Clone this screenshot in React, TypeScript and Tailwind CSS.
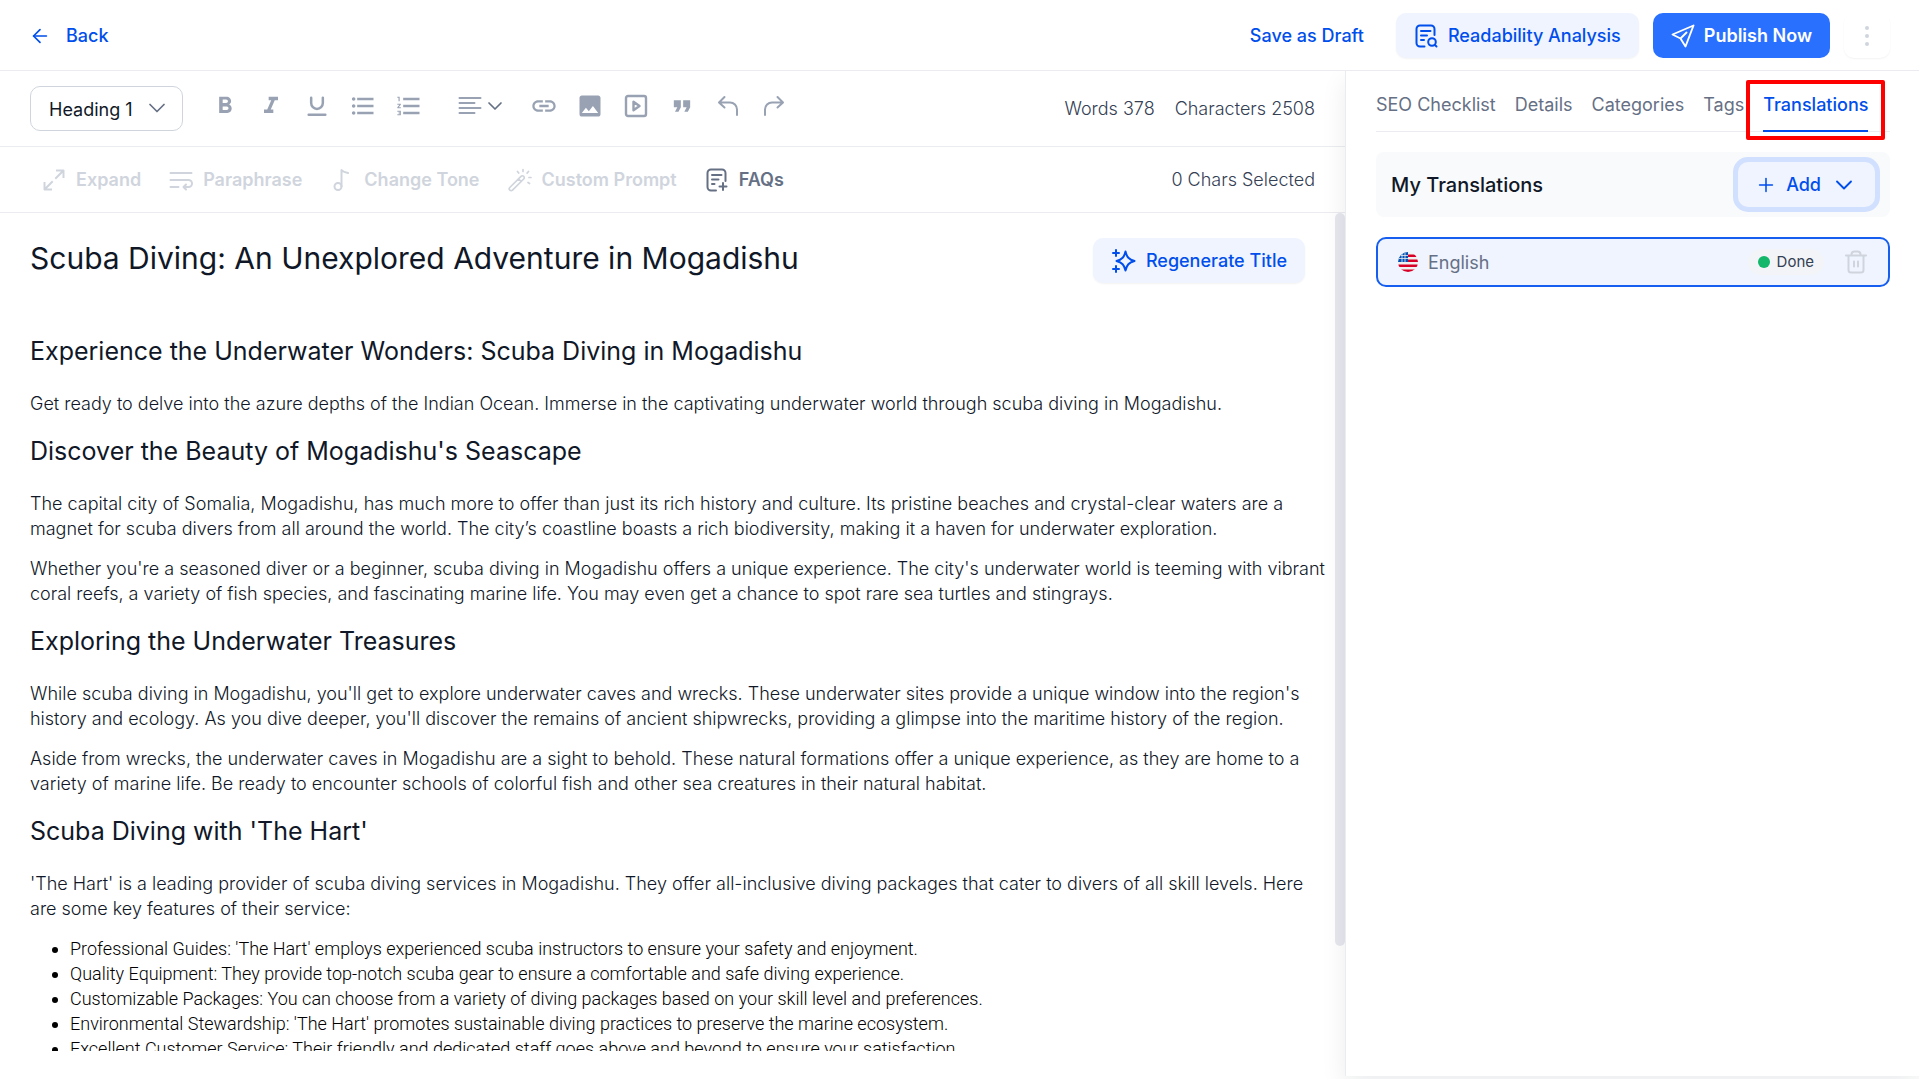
import React, { useState } from 'react';
import { ArrowLeft, ChevronDown, Plus } from 'lucide-react';
import { MdFormatBold, MdFormatItalic, MdFormatListBulleted, MdFormatListNumbered, MdFormatQuote, MdLink, MdImage } from 'react-icons/md';

type IconProps = { className?: string };

const stroke = {
  viewBox: '0 0 24 24',
  fill: 'none',
  stroke: 'currentColor',
  strokeWidth: 2,
  strokeLinecap: 'round' as const,
  strokeLinejoin: 'round' as const
};

const UnderlineIcon = ({ className }: IconProps) => (
  <svg {...stroke} strokeWidth={3} className={className}>
    <path d="M5 2v6.500a7 7 0 0 0 14 0V2M2 22.500h20" />
  </svg>
);

const AlignIcon = ({ className }: IconProps) => (
  <svg {...stroke} className={className}>
    <path d="M1.500 4h21M1.500 9h15M1.500 14h21M1.500 19h15" />
  </svg>
);

const VideoIcon = ({ className }: IconProps) => (
  <svg {...stroke} strokeWidth={2.400} className={className}>
    <rect x="2" y="2" width="20" height="20" rx="2" />
    <path d="M9.500 7.800v8.400l6-4.200z" />
  </svg>
);

const UndoIcon = ({ className }: IconProps) => (
  <svg {...stroke} className={className}>
    <path d="M8.500 3 3 8.500l5.500 5M3.500 8.500H14a7 7 0 0 1 7 7V21" />
  </svg>
);

const RedoIcon = ({ className }: IconProps) => (
  <svg {...stroke} className={className}>
    <path d="m15.500 3 5.500 5.500-5.500 5M20.500 8.500H10a7 7 0 0 0-7 7V21" />
  </svg>
);

const ExpandIcon = ({ className }: IconProps) => (
  <svg {...stroke} strokeLinecap="square" className={className}>
    <path d="M15 2.500h6.500V9M21 3l-7 7M2.500 15v6.500H9M3 21l7-7" />
  </svg>
);

const ParaphraseIcon = ({ className }: IconProps) => (
  <svg {...stroke} className={className}>
    <path d="M1.500 5h21M1.500 12h18a3.500 3.500 0 0 1 0 7H15M1.500 19h8M17 16.500 14.500 19l2.500 2.500" />
  </svg>
);

const ToneIcon = ({ className }: IconProps) => (
  <svg {...stroke} className={className}>
    <circle cx="8" cy="18.500" r="3.500" />
    <path d="M11.500 18.500V2c1.500 2 3.500 2.500 6.500 3" />
  </svg>
);

const WandIcon = ({ className }: IconProps) => (
  <svg {...stroke} strokeWidth={1.700} className={className}>
    <path d="M1.800 19.500 13 8.300a1.900 1.900 0 0 1 2.700 2.700L4.500 22.200a1.900 1.900 0 0 1-2.700-2.700zM10.500 10.800l2.700 2.700M15 1.500v2M9.500 3.500l1.200 1.600M20.500 3.500l-1.400 1.600M21 9.500h2M20 14.500l1.500 1" />
  </svg>
);

const FaqIcon = ({ className }: IconProps) => (
  <svg {...stroke} className={className}>
    <path d="M11 22.500H6a3.500 3.500 0 0 1-3.500-3.500V5A3.500 3.500 0 0 1 6 1.500h11A3.500 3.500 0 0 1 20.500 5v8M7 7h9.500M7 11.500h6.500M7 16h2.500M18 15v7M14.500 18.500h7" />
  </svg>
);

const ReadabilityIcon = ({ className }: IconProps) => (
  <svg {...stroke} className={className}>
    <path d="M10.500 22.500H6A3.500 3.500 0 0 1 2.500 19V5A3.500 3.500 0 0 1 6 1.500h11A3.500 3.500 0 0 1 20.500 5v6M7 7h9.500M7 11.500h6M7 16h3" />
    <circle cx="18" cy="18" r="3.800" />
    <path d="m21 21 1.500 1.500" />
  </svg>
);

const SendIcon = ({ className }: IconProps) => (
  <svg {...stroke} strokeWidth={1.900} className={className}>
    <path d="M22.500 1.500 1.500 10.500l8 4 5 8zM9.500 14.500l6-6" />
  </svg>
);

const SparkleIcon = ({ className }: IconProps) => (
  <svg {...stroke} className={className}>
    <path d="M13.500 2.500c1.300 5.600 3.300 7.900 9 9.500-5.700 1.600-7.700 3.900-9 9.500-1.300-5.600-3.300-7.900-9-9.500 5.700-1.600 7.700-3.900 9-9.500zM4 1v6M1 4h6M4 17v6M1 20h6" />
  </svg>
);

const TrashIcon = ({ className }: IconProps) => (
  <svg {...stroke} className={className}>
    <path d="M2 5.500h20M4.500 5.500V20A2.500 2.500 0 0 0 7 22.500h10a2.500 2.500 0 0 0 2.500-2.500V5.500M7.500 5.500v-1A3 3 0 0 1 10.500 1.500h3a3 3 0 0 1 3 3v1M10 11.500v5M14 11.500v5" />
  </svg>
);

const FlagIcon = ({ className }: IconProps) => (
  <svg viewBox="0 0 20 20" className={className}>
    <clipPath id="flag">
      <circle cx="10" cy="10" r="10" />
    </clipPath>
    <g clipPath="url(#flag)">
      <path fill="#f0f0f0" d="M0 0h20v20H0z" />
      <path fill="#d80027" d="M10 2.500h10V5H10zM10 7.500h10V10H10zM0 12.500h20V15H0zM0 17.500h20V20H0z" />
      <path fill="#0052b4" d="M0 0h10v10H0z" />
      <path stroke="#f0f0f0" strokeWidth="0.800" d="M3 3.500h7M1 6.500h9M4 2v8M7 1v9" />
    </g>
  </svg>
);

const tabs = ['SEO Checklist', 'Details', 'Categories', 'Tags', 'Translations'];

const aiTools = [
  { label: 'Expand', icon: ExpandIcon, enabled: false },
  { label: 'Paraphrase', icon: ParaphraseIcon, enabled: false },
  { label: 'Change Tone', icon: ToneIcon, enabled: false },
  { label: 'Custom Prompt', icon: WandIcon, enabled: false },
  { label: 'FAQs', icon: FaqIcon, enabled: true }
];

const sections = [
  {
    heading: 'Experience the Underwater Wonders: Scuba Diving in Mogadishu',
    paragraphs: [
      'Get ready to delve into the azure depths of the Indian Ocean. Immerse in the captivating underwater world through scuba diving in Mogadishu.'
    ]
  },
  {
    heading: "Discover the Beauty of Mogadishu's Seascape",
    paragraphs: [
      'The capital city of Somalia, Mogadishu, has much more to offer than just its rich history and culture. Its pristine beaches and crystal-clear waters are a magnet for scuba divers from all around the world. The city’s coastline boasts a rich biodiversity, making it a haven for underwater exploration.',
      "Whether you're a seasoned diver or a beginner, scuba diving in Mogadishu offers a unique experience. The city's underwater world is teeming with vibrant coral reefs, a variety of fish species, and fascinating marine life. You may even get a chance to spot rare sea turtles and stingrays."
    ]
  },
  {
    heading: 'Exploring the Underwater Treasures',
    paragraphs: [
      "While scuba diving in Mogadishu, you'll get to explore underwater caves and wrecks. These underwater sites provide a unique window into the region's history and ecology. As you dive deeper, you'll discover the remains of ancient shipwrecks, providing a glimpse into the maritime history of the region.",
      'Aside from wrecks, the underwater caves in Mogadishu are a sight to behold. These natural formations offer a unique experience, as they are home to a variety of marine life. Be ready to encounter schools of colorful fish and other sea creatures in their natural habitat.'
    ]
  },
  {
    heading: "Scuba Diving with 'The Hart'",
    paragraphs: [
      "'The Hart' is a leading provider of scuba diving services in Mogadishu. They offer all-inclusive diving packages that cater to divers of all skill levels. Here are some key features of their service:"
    ]
  }
];

const features = [
  "Professional Guides: 'The Hart' employs experienced scuba instructors to ensure your safety and enjoyment.",
  'Quality Equipment: They provide top-notch scuba gear to ensure a comfortable and safe diving experience.',
  'Customizable Packages: You can choose from a variety of diving packages based on your skill level and preferences.',
  "Environmental Stewardship: 'The Hart' promotes sustainable diving practices to preserve the marine ecosystem.",
  'Excellent Customer Service: Their friendly and dedicated staff goes above and beyond to ensure your satisfaction.'
];

const App: React.FC = () => {
  const [activeTab, setActiveTab] = useState('Translations');
  const [block, setBlock] = useState('Heading 1');

  return (
    <div className="h-screen flex flex-col bg-white font-['Inter',sans-serif] text-[18px] leading-6 text-[#101828] overflow-hidden">
      {/* Header */}
      <header className="relative z-10 flex items-center justify-between h-[71px] shrink-0 border-b border-[#eaecf0] bg-white pt-px pl-[29px] pr-[29px]">
        <a href="#back" className="flex items-center gap-[15px] font-medium text-[#004eeb]">
          <ArrowLeft size={22} strokeWidth={1.800} />
          Back
        </a>
        <div className="flex items-center gap-[14px] font-medium">
          <button className="h-[45px] px-[18px] text-[#004eeb]">Save as Draft</button>
          <button className="flex items-center gap-[10px] h-[45px] px-[18px] rounded-[10px] bg-[#eff4ff] text-[#004eeb] shadow-xs">
            <ReadabilityIcon className="w-6 h-6" />
            Readability Analysis
          </button>
          <button className="flex items-center gap-[9px] h-[45px] px-[18px] rounded-[10px] bg-[#2970ff] text-white font-semibold">
            <SendIcon className="w-6 h-6" />
            Publish Now
          </button>
          <button aria-label="More options" className="flex items-center justify-center w-[46px] h-[45px] rounded-[10px] text-[#d0d5dd] shadow-xs">
            <svg viewBox="0 0 4 20" fill="currentColor" className="w-1 h-5">
              <circle cx="2" cy="2" r="2" />
              <circle cx="2" cy="10" r="2" />
              <circle cx="2" cy="18" r="2" />
            </svg>
          </button>
        </div>
      </header>

      <div className="flex flex-1 min-h-0">
        {/* Editor */}
        <main className="flex-1 min-w-0 flex flex-col pb-7">
          <div className="flex items-center justify-between h-[76px] shrink-0 border-b border-[#eaecf0] px-[30px]">
            <div className="flex items-center">
              <div className="relative">
                <select
                  aria-label="Text style"
                  value={block}
                  onChange={e => setBlock(e.target.value)}
                  className="appearance-none w-[153px] h-[45px] pl-[18px] pt-[2px] border border-[#d0d5dd] rounded-[10px] bg-white outline-none"
                >
                  <option>Heading 1</option>
                  <option>Heading 2</option>
                  <option>Paragraph</option>
                </select>
                <ChevronDown size={28} strokeWidth={1.500} className="absolute right-3 top-2 text-[#667085] pointer-events-none" />
              </div>
              <div className="flex items-center gap-[18px] ml-7 pb-[6px] text-[#98a2b3]">
                <button aria-label="Bold" className="w-7 flex justify-center"><MdFormatBold size={30} /></button>
                <button aria-label="Italic" className="w-7 flex justify-center"><MdFormatItalic size={30} /></button>
                <button aria-label="Underline" className="w-7 flex justify-center"><UnderlineIcon className="w-6 h-5" /></button>
                <button aria-label="Bulleted list" className="w-7 flex justify-center"><MdFormatListBulleted size={28} /></button>
                <button aria-label="Numbered list" className="w-7 flex justify-center"><MdFormatListNumbered size={28} /></button>
              </div>
              <div className="flex items-center gap-[18px] ml-[35px] pb-[6px] text-[#98a2b3]">
                <button aria-label="Alignment" className="w-[50px] flex items-center gap-px">
                  <AlignIcon className="w-6 h-6" />
                  <ChevronDown size={24} strokeWidth={1.700} className="text-[#667085]" />
                </button>
                <button aria-label="Link" className="w-7 ml-1 flex justify-center"><MdLink size={30} /></button>
                <button aria-label="Image" className="w-7 flex justify-center"><MdImage size={30} /></button>
                <button aria-label="Video" className="w-7 flex justify-center"><VideoIcon className="w-6 h-6" /></button>
                <button aria-label="Quote" className="w-7 flex justify-center"><MdFormatQuote size={30} /></button>
                <button aria-label="Undo" className="w-7 flex justify-center"><UndoIcon className="w-6 h-6" /></button>
                <button aria-label="Redo" className="w-7 flex justify-center"><RedoIcon className="w-6 h-6" /></button>
              </div>
            </div>
            <div className="flex gap-5 text-[#344054] font-light">
              <span>Words 378</span>
              <span>Characters 2508</span>
            </div>
          </div>

          <div className="flex items-center justify-between h-[66px] shrink-0 border-b border-[#eaecf0] pl-[42px] pr-[30px]">
            <div className="flex items-center gap-7">
              {aiTools.map(({ label, icon: Icon, enabled }) => (
                <button
                  key={label}
                  disabled={!enabled}
                  className={`flex items-center gap-[10px] font-semibold ${enabled ? 'text-[#667085]' : 'text-[#d0d5dd]'}`}
                >
                  <Icon className="w-6 h-6" />
                  {label}
                </button>
              ))}
            </div>
            <span className="text-[#344054] font-light">0 Chars Selected</span>
          </div>

          <div className="flex flex-1 min-h-0">
            <article className="flex-1 min-w-0 overflow-hidden pl-[30px] pr-[10px] pt-[25px]">
              <div className="flex items-start justify-between pr-5">
                <h1 className="text-[30px] leading-10">Scuba Diving: An Unexplored Adventure in Mogadishu</h1>
                <button className="flex items-center gap-[10px] h-[45px] pl-[19px] pr-[18px] rounded-[10px] bg-[#eff4ff] font-medium text-[#004eeb] shadow-xs">
                  <SparkleIcon className="w-6 h-6" />
                  Regenerate Title
                </button>
              </div>
              <div className="pt-[33px] text-[#101828] leading-[25px] font-light">
                {sections.map(({ heading, paragraphs }) => (
                  <section key={heading}>
                    <h2 className="mt-5 mb-[25px] text-[25px] leading-[30px] font-normal">{heading}</h2>
                    {paragraphs.map(p => (
                      <p key={p} className="mb-[15px]">{p}</p>
                    ))}
                  </section>
                ))}
              </div>
              <ul className="list-disc pl-10 font-['Roboto',sans-serif] font-light leading-[25px] text-black">
                {features.map(f => (
                  <li key={f}>{f}</li>
                ))}
              </ul>
            </article>
            {/* Scrollbar */}
            <div className="w-[10px] shrink-0">
              <div className="h-7/8 rounded-full bg-[#e7e8ee]" />
            </div>
          </div>
        </main>

        {/* Sidebar */}
        <aside className="w-[574px] shrink-0 mb-[3px] border-l border-[#eaecf0] bg-white pl-[30px] pr-[29px] shadow-[0_10px_24px_rgba(16,24,40,0.08)]">
          <nav className="flex gap-[19px] h-[61px] border-b border-[#eaecf0]">
            {tabs.map(tab => (
              <div key={tab} className="relative flex">
                <button
                  onClick={() => setActiveTab(tab)}
                  className={`h-[61px] pb-[5px] pt-[14px] border-b-2 whitespace-nowrap ${
                    activeTab === tab ? 'border-[#004eeb] text-[#004eeb] font-medium' : 'border-transparent text-[#667085]'
                  }`}
                >
                  {tab}
                </button>
                {tab === 'Translations' && (
                  <div className="absolute -left-[17px] -right-[17px] top-[9px] h-[60px] border-4 border-[#ff0000] rounded-[2px] pointer-events-none" />
                )}
              </div>
            ))}
          </nav>

          <div className="flex items-center justify-between mt-5 h-[65px] px-[15px] rounded-lg bg-[#f9fafb]">
            <h3 className="text-[20px] font-medium">My Translations</h3>
            <button className="flex items-center gap-[9px] h-[45px] px-[17px] rounded-[10px] bg-[#eff4ff] font-medium text-[#004eeb] ring-[5px] ring-[#d1e0ff]">
              <Plus size={22} strokeWidth={1.700} />
              Add
              <ChevronDown size={28} strokeWidth={1.600} />
            </button>
          </div>

          <div className="flex items-center mt-5 h-[50px] px-5 rounded-[10px] border-2 border-[#155eef] bg-[#eff4ff]">
            <FlagIcon className="w-5 h-5 mr-[10px]" />
            <span className="flex-1 pt-[2px] text-[#667085]">English</span>
            <span className="flex items-center gap-[7px] px-[10px] rounded-full bg-[#f2f4f7] text-[15px] leading-[26px] text-[#344054]">
              <span className="w-3 h-3 rounded-full bg-[#12b76a]" />
              Done
            </span>
            <button aria-label="Delete translation" className="ml-5 text-[#d0d5dd]">
              <TrashIcon className="w-6 h-6" />
            </button>
          </div>
        </aside>
      </div>
    </div>
  );
};

export default App;
